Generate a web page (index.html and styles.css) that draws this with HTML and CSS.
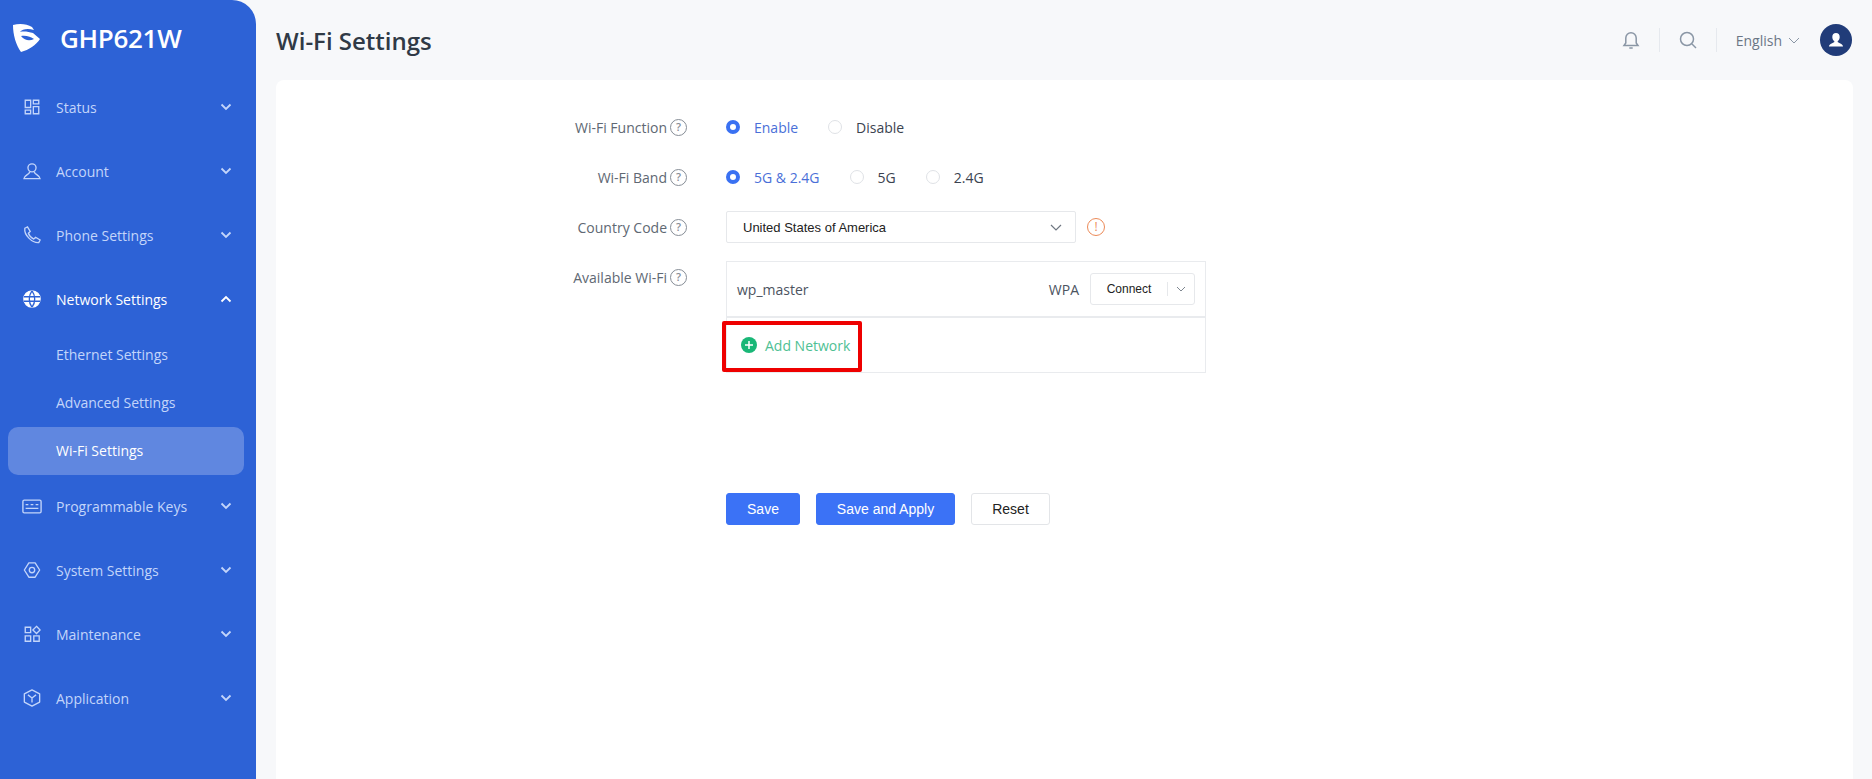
FILE: index.html
```html
<!DOCTYPE html>
<html lang="en">
<head>
	<meta charset="UTF-8">
	<title>Wi-Fi Settings</title>

	<link rel="stylesheet" href="styles.css">
</head>
<body>

	<aside class="sidebar">
		<div class="brand">
			<svg class="logo" width="28" height="30" viewBox="0 0 28 30">
				<path d="M1 2 C8 0 15 1 20 4 L22 7 C16 5 10 6 8 9 C12 8 17 9 21 10 L28 16 C24 22 17 27 9 29 C4 22 1 12 1 2 Z" fill="#fff"/>
				<path d="M9 13 C14 12 19 14 22 16 C18 18 13 18 9 13 Z" fill="#2d62d6"/>
			</svg>
			<span class="brand-name">GHP621W</span>
		</div>

		<ul class="nav">
			<li class="nav-item">
				<svg class="nav-icon" viewBox="0 0 20 20"><path d="M2.5 2.5h6v8h-6zM11.500 2.500h6v4h-6zM11.500 9.500h6v8h-6zM2.500 13.500h6v4h-6z"/></svg>
				<span class="nav-text">Status</span>
				<svg class="nav-arrow" viewBox="0 0 12 8"><path d="M1.500 1.500 6 6l4.500-4.500"/></svg>
			</li>
			<li class="nav-item">
				<svg class="nav-icon" viewBox="0 0 20 20"><circle cx="10" cy="6.500" r="4.500"/><path d="M7.500 11 C7 14 1 15 1 18.500h18 C19 15 13 14 12.500 11"/></svg>
				<span class="nav-text">Account</span>
				<svg class="nav-arrow" viewBox="0 0 12 8"><path d="M1.500 1.500 6 6l4.500-4.500"/></svg>
			</li>
			<li class="nav-item">
				<svg class="nav-icon" viewBox="0 0 20 20"><path d="M2 2.500 5 1l3 5-2 2c1 3 3 5 6 6.500l2-2 5 3-1.500 3C10 19 1 10 2 2.500Z"/></svg>
				<span class="nav-text">Phone Settings</span>
				<svg class="nav-arrow" viewBox="0 0 12 8"><path d="M1.500 1.500 6 6l4.500-4.500"/></svg>
			</li>
			<li class="nav-item open">
				<svg class="nav-icon" viewBox="0 0 20 20"><circle cx="10" cy="10" r="9" fill="#fff"/><path d="M1 7.500h18M1 12.500h18M10 1C6 6 6 14 10 19M10 1c4 5 4 13 0 18" stroke="#2d62d6" stroke-width="1.500"/></svg>
				<span class="nav-text">Network Settings</span>
				<svg class="nav-arrow" viewBox="0 0 12 8"><path d="M1.500 6.500 6 2l4.500 4.500"/></svg>
			</li>
			<li class="sub-item">Ethernet Settings</li>
			<li class="sub-item">Advanced Settings</li>
			<li class="sub-item current">Wi-Fi Settings</li>
			<li class="nav-item keys">
				<svg class="nav-icon wide" viewBox="0 0 22 16"><rect x="1" y="1" width="20" height="14" rx="1.500"/><path d="M4 6h3M9.500 6h3M15 6h3M4 10h14"/></svg>
				<span class="nav-text">Programmable Keys</span>
				<svg class="nav-arrow" viewBox="0 0 12 8"><path d="M1.500 1.500 6 6l4.500-4.500"/></svg>
			</li>
			<li class="nav-item">
				<svg class="nav-icon" viewBox="0 0 20 20"><path d="M6.500 2h7l5 8-5 8h-7l-5-8z" stroke-linejoin="round"/><circle cx="10" cy="10" r="3"/></svg>
				<span class="nav-text">System Settings</span>
				<svg class="nav-arrow" viewBox="0 0 12 8"><path d="M1.500 1.500 6 6l4.500-4.500"/></svg>
			</li>
			<li class="nav-item">
				<svg class="nav-icon" viewBox="0 0 20 20"><path d="M2.500 2.500h6v6h-6zM2.500 12h6v6h-6zM12 12h6v6h-6zM15 1.500l4 4-4 4-4-4z"/></svg>
				<span class="nav-text">Maintenance</span>
				<svg class="nav-arrow" viewBox="0 0 12 8"><path d="M1.500 1.500 6 6l4.500-4.500"/></svg>
			</li>
			<li class="nav-item">
				<svg class="nav-icon" viewBox="0 0 20 20"><path d="M10 1l8.500 4.500v9L10 19l-8.500-4.500v-9z" stroke-linejoin="round"/><path d="M5.500 6.500 10 10l4.500-3.500M10 10v5"/></svg>
				<span class="nav-text">Application</span>
				<svg class="nav-arrow" viewBox="0 0 12 8"><path d="M1.500 1.500 6 6l4.500-4.500"/></svg>
			</li>
		</ul>
	</aside>

	<div class="main">
		<header class="topbar">
			<h1 class="title">Wi-Fi Settings</h1>
			<div class="tools">
				<svg class="tool-icon" width="18" height="20" viewBox="0 0 18 20"><path d="M2 15.500h14l-1.800-2.500V8A5.200 5.200 0 0 0 3.800 8v5zM7.300 18h3.400"/></svg>
				<span class="tool-line"></span>
				<svg class="tool-icon" width="18" height="18" viewBox="0 0 18 18"><circle cx="8" cy="8" r="6.500"/><path d="m13 13 4 4"/></svg>
				<span class="tool-line"></span>
				<span class="lang">English</span>
				<svg class="lang-arrow" width="12" height="7" viewBox="0 0 12 7"><path d="M1 1l5 5 5-5"/></svg>
				<span class="avatar">
					<svg width="16" height="16" viewBox="0 0 16 16"><path d="M8 1c2.300 0 3.700 1.700 3.700 3.900 0 1.800-.8 3.300-2 4.100v1c0 .8 5.300 1.500 5.300 4.500H1c0-3 5.300-3.700 5.300-4.500V9c-1.200-.8-2-2.300-2-4.100C4.300 2.700 5.700 1 8 1Z" fill="#fff"/></svg>
				</span>
			</div>
		</header>

		<section class="card">
			<div class="form-row">
				<div class="label">Wi-Fi Function <span class="help">?</span></div>
				<div class="field">
					<span class="radio on"></span><span class="radio-text on">Enable</span>
					<span class="radio"></span><span class="radio-text">Disable</span>
				</div>
			</div>
			<div class="form-row">
				<div class="label">Wi-Fi Band <span class="help">?</span></div>
				<div class="field">
					<span class="radio on"></span><span class="radio-text on">5G &amp; 2.4G</span>
					<span class="radio"></span><span class="radio-text">5G</span>
					<span class="radio"></span><span class="radio-text">2.4G</span>
				</div>
			</div>
			<div class="form-row">
				<div class="label">Country Code <span class="help">?</span></div>
				<div class="field">
					<div class="select">
						<span>United States of America</span>
						<svg width="12" height="7" viewBox="0 0 12 7"><path d="M1 1l5 5 5-5"/></svg>
					</div>
					<span class="warn">!</span>
				</div>
			</div>
			<div class="form-row top">
				<div class="label">Available Wi-Fi <span class="help">?</span></div>
				<div class="wifi-box">
					<div class="wifi-row">
						<span class="ssid">wp_master</span>
						<span class="security">WPA</span>
						<div class="connect">
							<span class="connect-text">Connect</span>
							<span class="connect-arrow">
								<svg width="10" height="6" viewBox="0 0 10 6"><path d="M1 1l4 4 4-4"/></svg>
							</span>
						</div>
					</div>
					<div class="add-row">
						<span class="plus">
							<svg width="10" height="10" viewBox="0 0 10 10"><path d="M5 1v8M1 5h8"/></svg>
						</span>
						<span class="add-text">Add Network</span>
						<!-- 截图上的红框 -->
						<span class="red-box"></span>
					</div>
				</div>
			</div>
			<div class="actions">
				<button class="btn primary save">Save</button>
				<button class="btn primary apply">Save and Apply</button>
				<button class="btn reset">Reset</button>
			</div>
		</section>
	</div>

</body>
</html>
```

FILE: styles.css
```css
*{
	margin: 0;
	padding: 0;
	box-sizing: border-box;
}

html, body{
	height: 100%;
}

body{
	display: flex;
	overflow: hidden;
	background: #f7f8fa;
	font-family: "Open Sans", "Liberation Sans", sans-serif;
	font-size: 14px;
	color: #5c6470;
}

ul{
	list-style: none;
}

/* left menu */
.sidebar{
	width: 256px;
	flex-shrink: 0;
	background: #2d62d6;
	border-top-right-radius: 24px;
	overflow: hidden;
}

.brand{
	height: 75px;
	padding: 0 0 0 12px;
	display: flex;
	align-items: center;
}

.logo{
	flex-shrink: 0;
}

.brand-name{
	margin-left: 20px;
	font-size: 26px;
	font-weight: 600;
	letter-spacing: -0.3px;
	color: #fff;
}

.nav{
	margin-top: 0;
}

.nav-item{
	height: 64px;
	padding: 0 24px 0 23px;
	display: flex;
	align-items: center;
	color: #c3d5fa;
}

.nav-item.keys{
	margin-top: -1px;
}

.nav-item.open{
	color: #fff;
}

.nav-icon{
	width: 18px;
	height: 18px;
	flex-shrink: 0;
	fill: none;
	stroke: currentColor;
	stroke-width: 1.500;
}

.nav-icon.wide{
	width: 20px;
	height: 15px;
	margin-left: -1px;
	margin-right: -1px;
}

.nav-text{
	flex: 1;
	margin-left: 15px;
}

.nav-arrow{
	width: 12px;
	height: 8px;
	fill: none;
	stroke: currentColor;
	stroke-width: 1.800;
}

.sub-item{
	height: 48px;
	margin: 0 12px 0 8px;
	padding-left: 48px;
	border-radius: 10px;
	line-height: 48px;
	color: #c3d5fa;
}

.sub-item:first-of-type{
	margin-top: 1px;
}

.sub-item.current{
	background: #6087e0;
	color: #fff;
}

/* right side */
.main{
	flex: 1;
	min-width: 0;
	display: flex;
	flex-direction: column;
	padding: 0 19px 0 20px;
}

.topbar{
	height: 80px;
	flex-shrink: 0;
	display: flex;
	align-items: center;
	justify-content: space-between;
}

.title{
	font-size: 24px;
	font-weight: 600;
	color: #303a46;
}

.tools{
	display: flex;
	align-items: center;
}

.tool-icon{
	fill: none;
	stroke: #8a96a5;
	stroke-width: 1.500;
}

.tool-line{
	width: 1px;
	height: 24px;
	margin: 0 19px;
	background: #e6e9ee;
}

.tools .tool-line:last-of-type{
	margin-right: 16px;
}

.lang{
	color: #6b7685;
}

.lang-arrow{
	margin-left: 6px;
	fill: none;
	stroke: #8a96a5;
	stroke-width: 1;
}

.avatar{
	width: 32px;
	height: 32px;
	margin-left: 20px;
	margin-right: 1px;
	border-radius: 50%;
	background: #213c79;
	display: flex;
	align-items: center;
	justify-content: center;
}

.card{
	flex: 1;
	padding-top: 31px;
	background: #fff;
	border-radius: 8px 8px 0 0;
}

.form-row{
	min-height: 32px;
	margin-bottom: 18px;
	display: flex;
	align-items: center;
}

.form-row.top{
	align-items: flex-start;
	margin-bottom: 120px;
}

.form-row.top .label{
	height: 32px;
}

.label{
	width: 450px;
	flex-shrink: 0;
	padding-right: 39px;
	display: flex;
	align-items: center;
	justify-content: flex-end;
	color: #606873;
}

.help{
	width: 17px;
	height: 17px;
	margin-left: 3px;
	border: 1.500px solid #868d96;
	border-radius: 50%;
	font-size: 11px;
	font-weight: 600;
	line-height: 14px;
	text-align: center;
	color: #868d96;
}

.field{
	display: flex;
	align-items: center;
}

.radio{
	width: 14px;
	height: 14px;
	margin-right: 14px;
	border: 1px solid #dfe2e6;
	border-radius: 50%;
	background: #fff;
}

.radio.on{
	border: 4.500px solid #3a71f2;
}

.radio-text{
	margin-right: 30px;
	color: #3b4350;
}

.radio-text.on{
	color: #4a6fd8;
}

.select{
	width: 350px;
	height: 32px;
	padding: 0 13px 0 16px;
	border: 1px solid #e6e8eb;
	border-radius: 2px;
	display: flex;
	align-items: center;
	justify-content: space-between;
	font-family: "Liberation Sans", sans-serif;
	font-size: 13px;
	color: #222;
}

.select svg{
	fill: none;
	stroke: #6f7782;
	stroke-width: 1.200;
}

.warn{
	width: 18px;
	height: 18px;
	margin-left: 11px;
	border: 1.500px solid #ec8a58;
	border-radius: 50%;
	font-size: 12px;
	line-height: 15px;
	text-align: center;
	color: #ec8a58;
}

.wifi-box{
	width: 480px;
	height: 112px;
	border: 1px solid #e9ebee;
}

.wifi-row{
	height: 56px;
	padding: 0 10px;
	border-bottom: 2px solid #e9ebee;
	display: flex;
	align-items: center;
}

.ssid{
	flex: 1;
	color: #4c545f;
}

.security{
	margin-right: 11px;
	color: #4c545f;
}

.connect{
	width: 105px;
	height: 32px;
	border: 1px solid #e6e8eb;
	border-radius: 3px;
	display: flex;
	align-items: center;
}

.connect-text{
	width: 76px;
	text-align: center;
	font-family: "Liberation Sans", sans-serif;
	font-size: 12px;
	color: #222;
}

.connect-arrow{
	flex: 1;
	height: 14px;
	border-left: 1px solid #e6e8eb;
	display: flex;
	align-items: center;
	justify-content: center;
}

.connect-arrow svg{
	fill: none;
	stroke: #7f8790;
	stroke-width: 1;
}

.add-row{
	height: 54px;
	padding-left: 14px;
	display: flex;
	align-items: center;
	position: relative;
}

.plus{
	width: 16px;
	height: 16px;
	border-radius: 50%;
	background: #19b777;
	display: flex;
	align-items: center;
	justify-content: center;
}

.plus svg{
	fill: none;
	stroke: #fff;
	stroke-width: 1.500;
}

.add-text{
	margin-left: 8px;
	color: #4fbf94;
}

.red-box{
	position: absolute;
	left: -5px;
	top: 3px;
	width: 140px;
	height: 51px;
	border: 4px solid #ee0000;
	border-radius: 2px;
}

.actions{
	padding-left: 450px;
	display: flex;
}

.btn{
	height: 32px;
	margin-right: 16px;
	border: 1px solid #e3e5e8;
	border-radius: 3px;
	background: #fff;
	font-family: "Liberation Sans", sans-serif;
	font-size: 14px;
	color: #222;
}

.btn.primary{
	border-color: #3b72f6;
	background: #3b72f6;
	color: #fff;
}

.btn.save{
	width: 74px;
}

.btn.apply{
	width: 139px;
}

.btn.reset{
	width: 79px;
}
```
